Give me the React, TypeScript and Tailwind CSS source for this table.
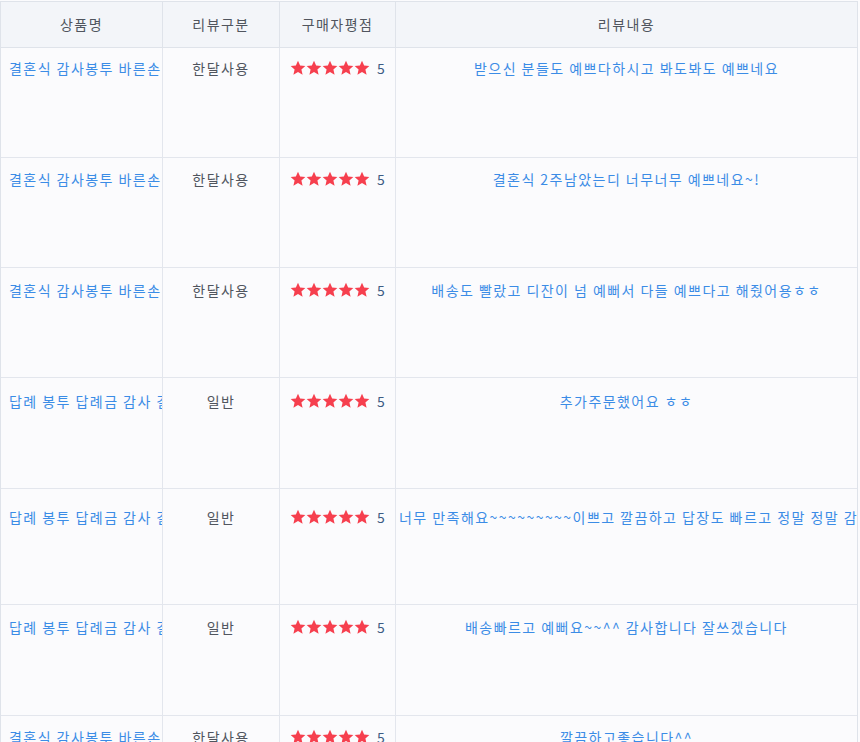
import React from "react";

type Row = { name: string; type: string; review: string; h: string; pt: string };

const rows: Row[] = [
  { name: "결혼식 감사봉투 바른손 카드", type: "한달사용", review: "받으신 분들도 예쁘다하시고 봐도봐도 예쁘네요", h: "h-[110px]", pt: "pt-[10px]" },
  { name: "결혼식 감사봉투 바른손 카드", type: "한달사용", review: "결혼식 2주남았는디 너무너무 예쁘네요~!", h: "h-[110px]", pt: "pt-[11px]" },
  { name: "결혼식 감사봉투 바른손 카드", type: "한달사용", review: "배송도 빨랐고 디잔이 넘 예뻐서 다들 예쁘다고 해줬어용ㅎㅎ", h: "h-[110px]", pt: "pt-[12px]" },
  { name: "답례 봉투 답례금 감사 결혼", type: "일반", review: "추가주문했어요 ㅎㅎ", h: "h-[111px]", pt: "pt-[13px]" },
  { name: "답례 봉투 답례금 감사 결혼", type: "일반", review: "너무 만족해요~~~~~~~~~이쁘고 깔끔하고 답장도 빠르고 정말 정말 감사합니다 또 주문할게요", h: "h-[116px]", pt: "pt-[18px]" },
  { name: "답례 봉투 답례금 감사 결혼", type: "일반", review: "배송빠르고 예뻐요~~^^ 감사합니다 잘쓰겠습니다", h: "h-[111px]", pt: "pt-[12px]" },
  { name: "결혼식 감사봉투 바른손 카드", type: "한달사용", review: "깔끔하고좋습니다^^", h: "h-[110px]", pt: "pt-[11px]" },
];

function Star() {
  return (
    <svg width="16" height="16" viewBox="0 0 24 24" className="shrink-0">
      <path
        d="M12 1.2l3.2 7.2 7.8.7-5.9 5.2 1.8 7.7L12 18l-6.9 4 1.8-7.7L1 9.1l7.8-.7z"
        fill="#f63f4e"
      />
    </svg>
  );
}

export default function App() {
  const font = { fontFamily: '"Noto Sans CJK KR", "Noto Sans", sans-serif' };
  return (
    <div className="w-[860px] h-[742px] overflow-hidden bg-[#fbfbfd] pt-px" style={font}>
      <div className="w-[858px] border-t border-l border-r border-[#dfe3ea]">
        <div className="grid grid-cols-[162px_117px_116px_1fr] h-[46px] bg-[#f3f5f9] border-b border-[#dfe3ea] text-[14px] tracking-[1.45px] text-[#50555e]">
          <div className="border-r border-[#dfe3ea] flex items-center justify-center">상품명</div>
          <div className="border-r border-[#dfe3ea] flex items-center justify-center">리뷰구분</div>
          <div className="border-r border-[#dfe3ea] flex items-center justify-center">구매자평점</div>
          <div className="flex items-center justify-center">리뷰내용</div>
        </div>
        {rows.map((r, i) => (
          <div
            key={i}
            className={`grid grid-cols-[162px_117px_116px_1fr] ${r.h} border-b border-[#e3e6ed] text-[14px] leading-[20px] tracking-[1.45px]`}
          >
            <div className={`border-r border-[#e3e6ed] ${r.pt} pl-[8px] overflow-hidden whitespace-nowrap text-[#3b8ce6]`}>
              {r.name}
            </div>
            <div className={`border-r border-[#e3e6ed] ${r.pt} text-center text-[#50555e] whitespace-nowrap`}>
              {r.type}
            </div>
            <div className={`border-r border-[#e3e6ed] ${r.pt} flex items-start justify-center tracking-normal`}>
              <div className="flex items-center h-[20px]">
                <Star />
                <Star />
                <Star />
                <Star />
                <Star />
                <span className="ml-[7px] text-[#3e5c84]">5</span>
              </div>
            </div>
            <div className={`${r.pt} px-[3px] overflow-hidden whitespace-nowrap text-center text-[#3b8ce6]`}>
              {r.review}
            </div>
          </div>
        ))}
      </div>
    </div>
  );
}
